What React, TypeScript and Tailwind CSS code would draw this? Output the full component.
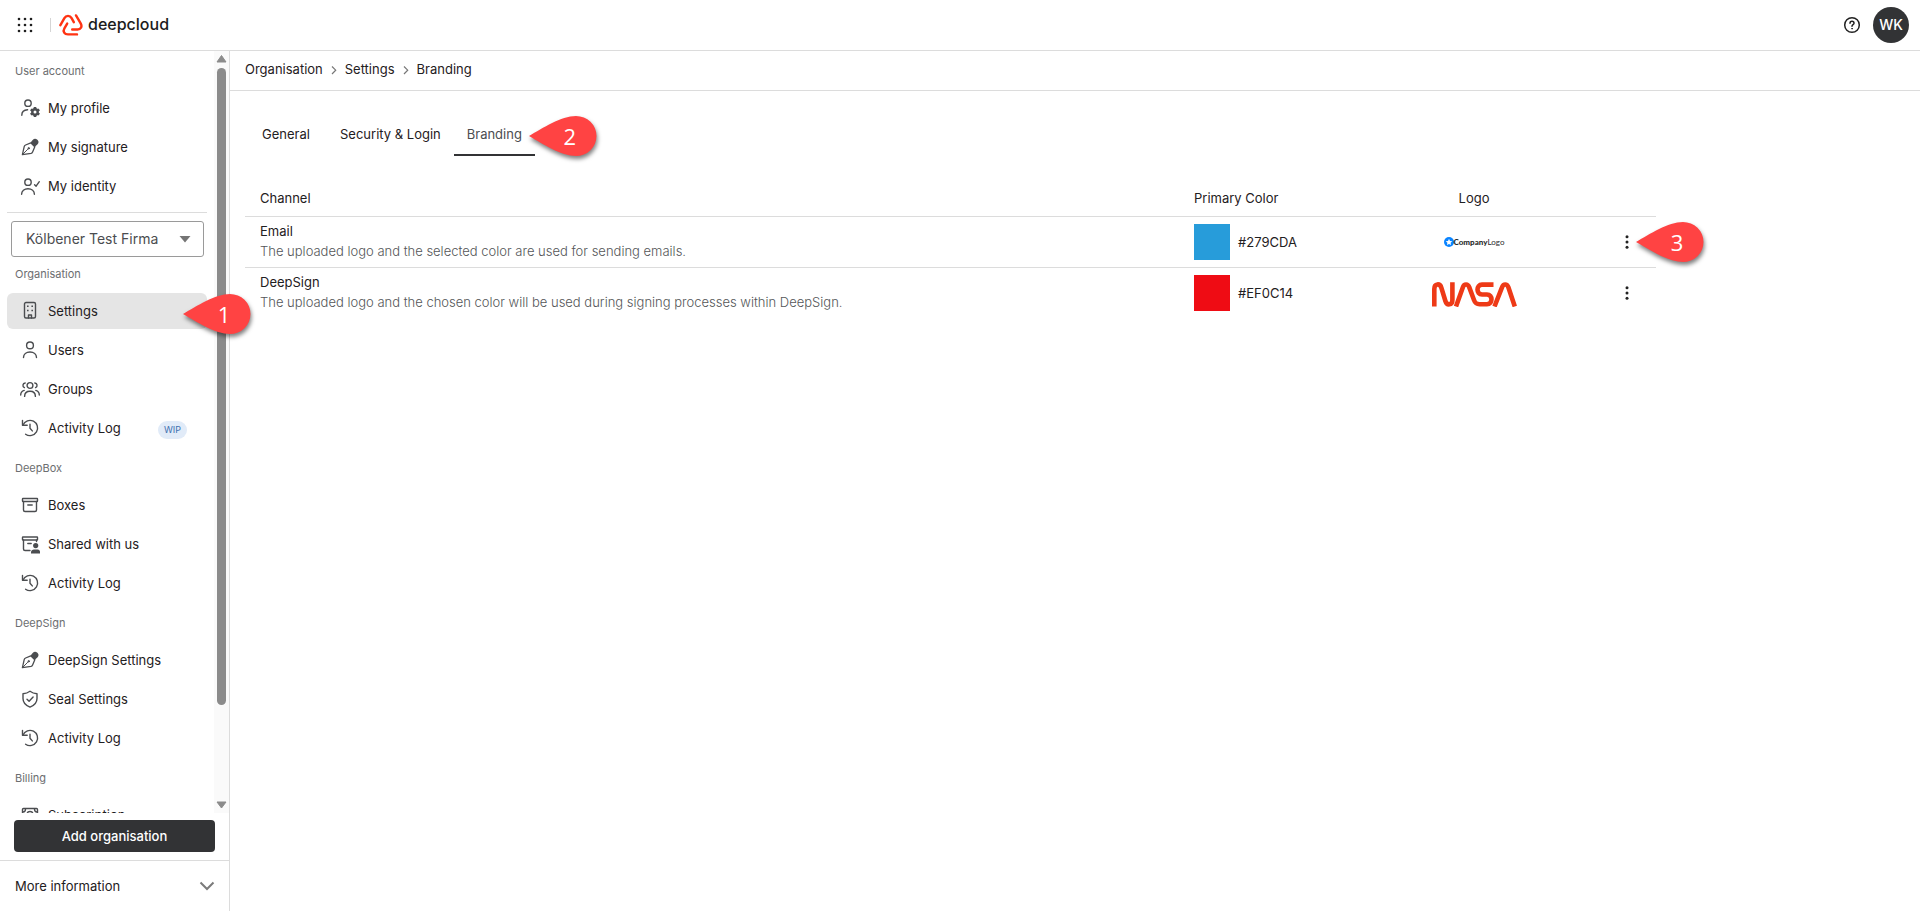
import React from "react";

type NavItem = {
    label: string;
    icon: React.ReactNode;
    active?: boolean;
    badge?: string;
};

type NavSectionProps = {
    title: string;
    items: NavItem[];
};

type Channel = {
    name: string;
    description: string;
    color: string;
    logo: React.ReactNode;
};

const Icon: React.FC<{ children: React.ReactNode }> = ({ children }) => (
    <svg
        viewBox="0 0 20 20"
        className="h-5 w-5 shrink-0 text-[#4b4d50]"
        fill="none"
        stroke="currentColor"
        strokeWidth="1.4"
        strokeLinecap="round"
        strokeLinejoin="round"
        aria-hidden="true"
    >
        {children}
    </svg>
);

const ProfileIcon = () => (
    <Icon>
        <circle cx="8" cy="5.2" r="3.2" />
        <path d="M1.8 17.2c0-3 2.2-5.2 5.8-5.4" />
        <circle cx="15" cy="14" r="2.7" strokeWidth="2.4" />
        <path
            d="M15 9v2M15 17v2M10.7 11.5l1.7 1M17.6 15.5l1.7 1M10.7 16.5l1.7-1M17.6 12.5l1.7-1"
            strokeWidth="2.6"
            strokeLinecap="butt"
        />
    </Icon>
);

const PenIcon = () => (
    <Icon>
        <path d="M2.4 17.6 4.2 9.6c.2-.8.7-1.3 1.4-1.6l5.2-2.2 4 4-2.2 5.2c-.3.7-.8 1.2-1.6 1.4z" strokeWidth="1.3" />
        <path d="m2.6 17.4 5-5" strokeWidth="1" />
        <circle cx="8.7" cy="11.3" r=".8" fill="currentColor" strokeWidth=".8" />
        <path d="m11.6 5.4 1.6-2c1-1 2.700-1 3.700-.1 1 1 1 2.600 0 3.600l-2 1.800z" fill="currentColor" />
    </Icon>
);

const IdentityIcon = () => (
    <Icon>
        <circle cx="8" cy="6.2" r="3.2" />
        <path d="M1.6 18.2c0-3.2 2.7-5.4 6.4-5.4s6.4 2.2 6.4 5.4" />
        <path d="m14.6 8.7 1.5 1.5 3.2-4.500" />
    </Icon>
);

const BuildingIcon = () => (
    <Icon>
        <rect x="4.5" y="1.5" width="11" height="15.5" rx="1.5" />
        <path d="M8.5 17v-3h3v3" />
        <path d="M7 5.2h1.600M11.4 5.2H13M7 9.5h1.600M11.4 9.5H13" strokeWidth="1.6" strokeLinecap="butt" />
    </Icon>
);

const UserIcon = () => (
    <Icon>
        <circle cx="10" cy="5.4" r="3.4" />
        <path d="M3.5 17.6c0-3.400 2.800-5.600 6.500-5.600s6.500 2.200 6.500 5.600" />
    </Icon>
);

const GroupIcon = () => (
    <Icon>
        <circle cx="10" cy="6.5" r="2.9" />
        <path d="M4.6 17.4c0-3.200 2.300-5.200 5.400-5.200s5.400 2 5.400 5.200" />
        <path d="M5.2 4a2.4 2.4 0 0 0-.8 4.6M14.8 4a2.4 2.4 0 0 1 .8 4.6" />
        <path d="M.7 16c0-2.200 1.300-3.900 3.500-4.600M19.3 16c0-2.200-1.300-3.900-3.500-4.600" />
    </Icon>
);

const HistoryIcon = () => (
    <Icon>
        <path d="M2.5 2.5v4.700h4.700" />
        <path d="M3 7a7.6 7.6 0 1 1 2.6 9.2" />
        <path d="M10 6.3v4l2.300 2.600" />
    </Icon>
);

const BoxIcon = () => (
    <Icon>
        <rect x="2.5" y="3.5" width="15" height="3" rx=".5" />
        <path d="M3.5 6.5V15c0 .8.6 1.5 1.5 1.5h10c.8 0 1.5-.7 1.5-1.5V6.5M7.8 10h4.400" />
    </Icon>
);

const SharedIcon = () => (
    <Icon>
        <rect x="2.5" y="3" width="15" height="3" rx=".5" />
        <path d="M3.5 6v9c0 .8.6 1.5 1.5 1.5h5M16.5 6v1.500M7.8 9.5h3.400" />
        <g fill="currentColor" stroke="none">
            <circle cx="15.7" cy="11.6" r="2.6" />
            <path d="M11 19.4v-1.200c0-1.700 1.500-2.700 3-2.700h3.200c1.700 0 3 1 3 2.700v1.200z" />
        </g>
    </Icon>
);

const ShieldIcon = () => (
    <Icon>
        <path d="M10 2.2c-2 1.500-4.300 2.300-7 2.500v4.800c0 4 2.800 7 7 8.600 4.200-1.600 7-4.600 7-8.600V4.7c-2.700-.2-5-1-7-2.500z" />
        <path d="m7 10.2 2.100 2.100 4-4.300" />
    </Icon>
);

const BillIcon = () => (
    <Icon>
        <rect x="2.5" y="3.5" width="15" height="12" rx="1" />
        <circle cx="10" cy="9.5" r="3" />
        <path d="M3 7c1.500 0 2.500-1 2.500-3M17 7c-1.500 0-2.500-1-2.500-3" />
    </Icon>
);

const AppsIcon = () => (
    <svg viewBox="0 0 16 16" className="h-4 w-4" fill="#1f1f1f" aria-hidden="true">
        {[2, 8, 14].map((y) =>
            [2, 8, 14].map((x) => <circle key={`${x}-${y}`} cx={x} cy={y} r="1.3" />)
        )}
    </svg>
);

const DeepcloudMark = () => (
    <svg
        viewBox="0 0 24 22"
        className="h-[22px] w-6"
        fill="none"
        stroke="#ff3312"
        strokeWidth="2.4"
        strokeLinecap="round"
        strokeLinejoin="round"
        aria-hidden="true"
    >
        <path d="M1.4 11.2 5.4 4.2c1.700-3.100 5.500-3.100 7.200 0l2.200 4" />
        <path d="M17 1.4l4.800 8.200c1.600 3 0 5.900-3.200 5.900h-5.400" />
        <path d="M18 20.4H9c-3.600 0-5.400-3-3.600-6l2.800-4.800" />
    </svg>
);

const CompanyLogo = () => (
    <div className="inline-flex items-center font-[Lato,sans-serif] text-[8px] leading-3 text-[#2b2b2b]">
        <svg viewBox="0 0 20 20" className="h-[10px] w-[10px]" aria-hidden="true">
            <circle cx="10" cy="10" r="10" fill="#0a84ff" />
            <path d="m10 3.5 2 4.300 4.600.6-3.400 3.200.9 4.600L10 14l-4.100 2.200.9-4.600-3.400-3.200 4.600-.6z" fill="#fff" />
        </svg>
        <span className="font-black">Company</span>
        <span>Logo</span>
    </div>
);

const NasaLogo = () => (
    <svg
        viewBox="0 0 85 25"
        className="mt-[3px] inline-block h-[25px] w-[85px]"
        fill="none"
        stroke="#ee3a17"
        strokeWidth="4.6"
        role="img"
        aria-label="NASA"
    >
        <path d="M2.3 24.5V7C2.3 1.2 8 1 9.4 5.8l4 13.200c1.500 5 7 4.200 7-1V.3" />
        <path d="M24 24.5 30.8 5.4c1.300-3.900 5.200-3.900 6.500 0L42 18c1.200 3.400 2.600 4.200 5.600 4.200H55c6 0 6-9.700 0-9.700h-5c-6 0-6-9.900 0-9.900h11.500" />
        <path d="M62.5 24.5 70 5.4c1.400-3.900 5-3.900 6.400 0l6.400 19.100" />
    </svg>
);

const Pin: React.FC<{ number: number; className: string }> = ({ number, className }) => (
    <div className={`pointer-events-none absolute z-10 h-10 w-[68px] ${className}`}>
        <svg
            viewBox="0 0 68 40"
            className="h-10 w-[68px] overflow-visible drop-shadow-[1px_3px_2px_rgba(0,0,0,0.5)]"
            aria-hidden="true"
        >
            <path d="M0 20C14 12 32 0 47 0a20.5 20 0 0 1 0 40C32 40 14 28 0 20z" fill="#ff4343" />
        </svg>
        <span className="absolute inset-y-0 left-[28px] flex w-[26px] items-center justify-center font-['Open_Sans',sans-serif] text-[22px] leading-10 font-normal text-white">
            {number}
        </span>
    </div>
);

const NavSection: React.FC<NavSectionProps> = ({ title, items }) => (
    <section>
        <h2 className="pb-[11px] pl-2 text-[11px] leading-4 text-[#6c6e70]">{title}</h2>
        <ul className="flex flex-col gap-[3px]">
            {items.map((item) => (
                <li key={item.label}>
                    <a
                        href="#"
                        className={`flex h-9 items-center gap-2 rounded-md pr-5 pl-[13px] ${item.active ? "bg-[#e5e5e5]" : ""}`}
                    >
                        {item.icon}
                        <span className="flex-1 pb-px whitespace-nowrap">{item.label}</span>
                        {item.badge && (
                            <span className="mt-1 rounded-full bg-[#e1ebf8] px-[6px] text-[9px] leading-[18px] text-[#3f6fb0]">
                                {item.badge}
                            </span>
                        )}
                    </a>
                </li>
            ))}
        </ul>
    </section>
);

const accountItems: NavItem[] = [
    { label: "My profile", icon: <ProfileIcon /> },
    { label: "My signature", icon: <PenIcon /> },
    { label: "My identity", icon: <IdentityIcon /> },
];

const sections: NavSectionProps[] = [
    {
        title: "Organisation",
        items: [
            { label: "Settings", icon: <BuildingIcon />, active: true },
            { label: "Users", icon: <UserIcon /> },
            { label: "Groups", icon: <GroupIcon /> },
            { label: "Activity Log", icon: <HistoryIcon />, badge: "WIP" },
        ],
    },
    {
        title: "DeepBox",
        items: [
            { label: "Boxes", icon: <BoxIcon /> },
            { label: "Shared with us", icon: <SharedIcon /> },
            { label: "Activity Log", icon: <HistoryIcon /> },
        ],
    },
    {
        title: "DeepSign",
        items: [
            { label: "DeepSign Settings", icon: <PenIcon /> },
            { label: "Seal Settings", icon: <ShieldIcon /> },
            { label: "Activity Log", icon: <HistoryIcon /> },
        ],
    },
    {
        title: "Billing",
        items: [{ label: "Subscription", icon: <BillIcon /> }],
    },
];

const channels: Channel[] = [
    {
        name: "Email",
        description: "The uploaded logo and the selected color are used for sending emails.",
        color: "#279CDA",
        logo: <CompanyLogo />,
    },
    {
        name: "DeepSign",
        description: "The uploaded logo and the chosen color will be used during signing processes within DeepSign.",
        color: "#EF0C14",
        logo: <NasaLogo />,
    },
];

const Header = () => (
    <header className="flex h-[51px] shrink-0 items-center border-b border-[#dcdcdc] px-[11px]">
        <button type="button" aria-label="Apps" className="ml-[6px]">
            <AppsIcon />
        </button>
        <span className="ml-[17px] h-[14px] w-px bg-[#d5d5d5]" />
        <a href="#" className="ml-2 flex items-center gap-[5px]">
            <DeepcloudMark />
            <span className="pb-[2px] text-[16px] leading-5 font-medium text-[#1c1c1c]">deepcloud</span>
        </a>
        <button type="button" aria-label="Help" className="ml-auto">
            <svg viewBox="0 0 18 18" className="h-[18px] w-[18px]" fill="none" stroke="#222" strokeWidth="1.5" strokeLinecap="round">
                <circle cx="9" cy="9" r="7.3" />
                <path d="M7 7.2c0-2.600 4-2.600 4 0 0 1.500-2 1.500-2 3" />
                <circle cx="9" cy="12.7" r=".4" fill="#222" strokeWidth=".8" />
            </svg>
        </button>
        <button
            type="button"
            className="ml-3 h-9 w-9 rounded-full bg-[#323335] text-center text-[14px] font-medium text-white"
        >
            WK
        </button>
    </header>
);

const Scrollbar = () => (
    <div className="flex w-[15px] shrink-0 flex-col items-center bg-[#fafafa]" aria-hidden="true">
        <svg viewBox="0 0 15 17" className="h-[17px] w-[15px] shrink-0" fill="#8b8b8b">
            <path d="M7.5 4.5 12 11H3z" stroke="#8b8b8b" strokeLinejoin="round" />
        </svg>
        <div className="w-full flex-1">
            <div className="mx-auto h-7/8 w-[9px] rounded-full bg-[#8b8b8b]" />
        </div>
        <svg viewBox="0 0 15 17" className="h-[17px] w-[15px] shrink-0" fill="#8b8b8b">
            <path d="M7.5 12 12 6H3z" stroke="#8b8b8b" strokeLinejoin="round" />
        </svg>
    </div>
);

const Sidebar = () => (
    <aside className="relative flex w-[230px] shrink-0 flex-col border-r border-[#dcdcdc]">
        <div className="flex min-h-0 flex-1">
            <nav className="min-w-0 flex-1 overflow-hidden px-[7px] pt-3">
                <NavSection title="User account" items={accountItems} />
                <hr className="my-2 border-[#dcdcdc]" />
                <div className="relative mr-[3px] mb-[9px] ml-1">
                    <select
                        aria-label="Organisation"
                        className="h-9 w-full appearance-none rounded-[3px] border border-[#9a9a9a] bg-white px-[14px] text-[14px] text-[#4b4d50]"
                    >
                        <option>Kölbener Test Firma</option>
                    </select>
                    <svg viewBox="0 0 12 7" className="pointer-events-none absolute top-[15px] right-[13px] h-[7px] w-3" fill="#757575">
                        <path d="M.5 0h11L6 6.500z" />
                    </svg>
                </div>
                <div className="flex flex-col gap-[14px]">
                    {sections.map((section) => (
                        <NavSection key={section.title} {...section} />
                    ))}
                </div>
            </nav>
            <Scrollbar />
        </div>
        <div className="px-[14px] pt-[7px] pb-2">
            <button type="button" className="h-8 w-full rounded bg-[#323335] font-medium text-white">
                Add organisation
            </button>
        </div>
        <button
            type="button"
            className="flex h-[51px] items-center justify-between border-t border-[#dcdcdc] pr-[14px] pl-[15px]"
        >
            More information
            <svg viewBox="0 0 16 10" className="h-[10px] w-4" fill="none" stroke="#7b7b7b" strokeWidth="2">
                <path d="m1.5 1.500 6.500 6.500 6.500-6.500" />
            </svg>
        </button>
        <Pin number={1} className="top-[243px] left-[183px]" />
    </aside>
);

const Crumbs = () => (
    <nav aria-label="Breadcrumb" className="flex h-10 shrink-0 items-center border-b border-[#dcdcdc] px-[15px] pb-1">
        {["Organisation", "Settings", "Branding"].map((crumb, index) => (
            <React.Fragment key={crumb}>
                {index > 0 && (
                    <svg viewBox="0 0 6 10" className="mx-2 mt-[2px] h-[10px] w-[6px]" fill="none" stroke="#777" strokeWidth="1.2">
                        <path d="m1 1.500 3.700 3.700L1 9" />
                    </svg>
                )}
                <a href="#">{crumb}</a>
            </React.Fragment>
        ))}
    </nav>
);

const Tabs = () => (
    <div role="tablist" className="mt-[22px] flex">
        <button type="button" role="tab" className="h-[43px] min-w-[82px] px-[13px] pb-[2px]">
            General
        </button>
        <button type="button" role="tab" className="h-[43px] px-[13px] pb-[2px]">
            Security &amp; Login
        </button>
        <div className="relative">
            <button
                type="button"
                role="tab"
                aria-selected="true"
                className="h-[43px] border-b-2 border-[#323335] px-[13px] text-[#4b4d50]"
            >
                Branding
            </button>
            <Pin number={2} className="top-[3px] left-[75px]" />
        </div>
    </div>
);

const ChannelTable = () => (
    <table className="mt-6 w-[85%] table-fixed text-left">
        <colgroup>
            <col />
            <col className="w-[196px]" />
            <col className="w-[198px]" />
            <col className="w-[83px]" />
        </colgroup>
        <thead>
            <tr className="h-9 border-b border-[#dcdcdc]">
                <th className="px-[15px] font-normal">Channel</th>
                <th className="px-[15px] font-normal">Primary Color</th>
                <th className="text-center font-normal">Logo</th>
                <th aria-label="Actions" />
            </tr>
        </thead>
        <tbody>
            {channels.map((channel, index) => (
                <tr key={channel.name} className="h-[51px] border-b border-[#dcdcdc] last:border-b-0">
                    <td className="px-[15px] pb-[2px]">
                        <div>{channel.name}</div>
                        <div className="font-light text-[#545658]">{channel.description}</div>
                    </td>
                    <td className="px-[15px]">
                        <div className="flex items-center gap-2">
                            <span className="h-9 w-9" style={{ backgroundColor: channel.color }} />
                            {channel.color}
                        </div>
                    </td>
                    <td className="text-center">{channel.logo}</td>
                    <td className="pr-[11px]">
                        <div className="relative ml-auto h-9 w-9">
                            <button type="button" aria-label={`${channel.name} options`} className="flex h-9 w-9 items-center justify-center">
                                <svg viewBox="0 0 4 14" className="h-[14px] w-1" fill="#222">
                                    <circle cx="2" cy="1.7" r="1.5" />
                                    <circle cx="2" cy="7" r="1.5" />
                                    <circle cx="2" cy="12.3" r="1.5" />
                                </svg>
                            </button>
                            {index === 0 && <Pin number={3} className="-top-[2px] left-[27px]" />}
                        </div>
                    </td>
                </tr>
            ))}
        </tbody>
    </table>
);

export default function App() {
    return (
        <div className="flex h-screen flex-col bg-white font-[Inter,sans-serif] text-[13px] leading-5 text-[#1f2022]">
            <Header />
            <div className="flex min-h-0 flex-1">
                <Sidebar />
                <main className="min-w-0 flex-1">
                    <Crumbs />
                    <div className="px-[15px]">
                        <Tabs />
                        <ChannelTable />
                    </div>
                </main>
            </div>
        </div>
    );
}
